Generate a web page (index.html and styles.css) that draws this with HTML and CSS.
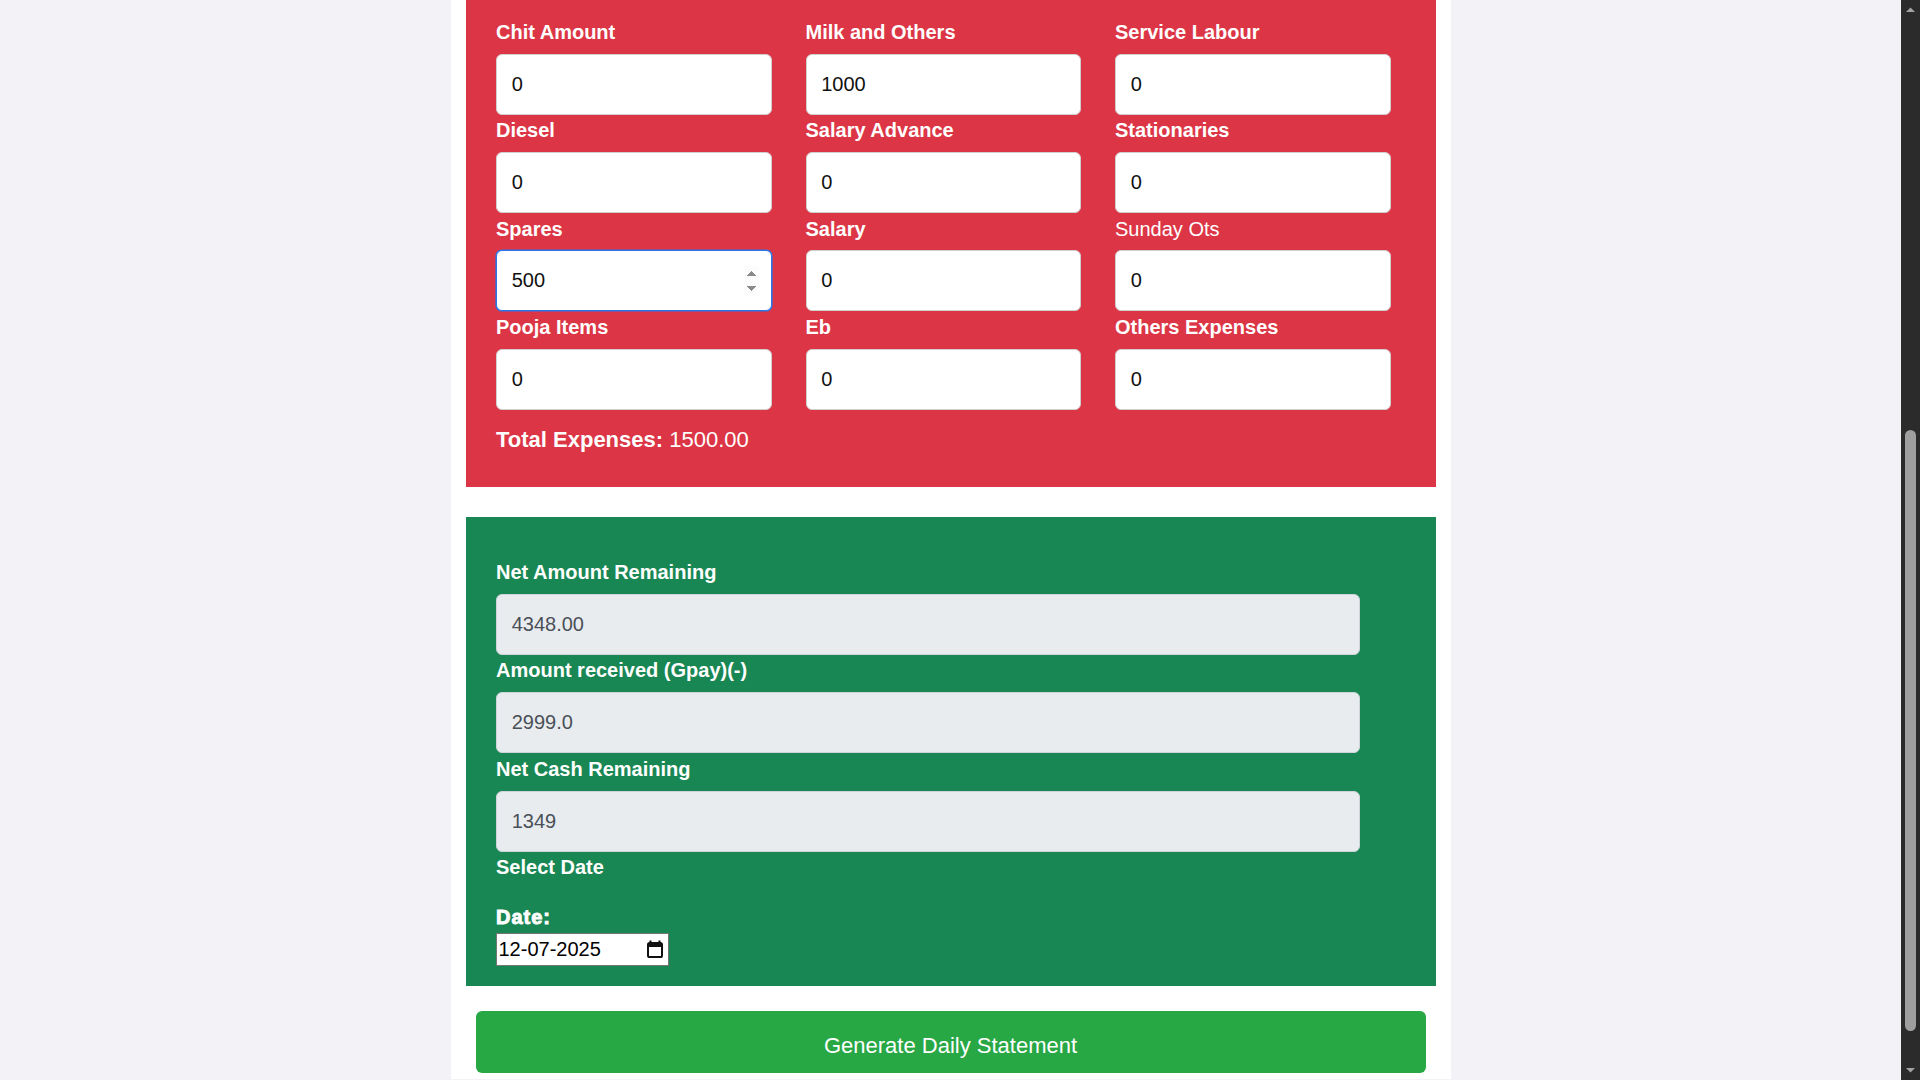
FILE: index.html
```html
<!DOCTYPE html>
<html lang="en">
<head>
<meta charset="utf-8">
<title>Daily Statement</title>
<link rel="stylesheet" href="styles.css">
</head>
<body>
<div class="viewport">
  <div class="container">
    <section class="card card-expense">
      <div class="field-grid">
        <div class="field"><label class="field-label">Chit Amount</label><input class="field-input" type="number" value="0"></div>
        <div class="field"><label class="field-label">Milk and Others</label><input class="field-input" type="number" value="1000"></div>
        <div class="field"><label class="field-label">Service Labour</label><input class="field-input" type="number" value="0"></div>

        <div class="field"><label class="field-label">Diesel</label><input class="field-input" type="number" value="0"></div>
        <div class="field"><label class="field-label">Salary Advance</label><input class="field-input" type="number" value="0"></div>
        <div class="field"><label class="field-label">Stationaries</label><input class="field-input" type="number" value="0"></div>

        <div class="field"><label class="field-label">Spares</label><input class="field-input field-input-active" type="number" value="500"></div>
        <div class="field"><label class="field-label">Salary</label><input class="field-input" type="number" value="0"></div>
        <div class="field"><label class="field-label field-label-plain">Sunday Ots</label><input class="field-input" type="number" value="0"></div>

        <div class="field"><label class="field-label">Pooja Items</label><input class="field-input" type="number" value="0"></div>
        <div class="field"><label class="field-label">Eb</label><input class="field-input" type="number" value="0"></div>
        <div class="field"><label class="field-label">Others Expenses</label><input class="field-input" type="number" value="0"></div>
      </div>
      <p class="total"><strong>Total Expenses:</strong> 1500.00</p>
    </section>

    <section class="card card-summary">
      <label class="field-label">Net Amount Remaining</label>
      <input class="field-input field-input-readonly" type="text" value="4348.00" readonly>
      <label class="field-label">Amount received (Gpay)(-)</label>
      <input class="field-input field-input-readonly" type="text" value="2999.0" readonly>
      <label class="field-label">Net Cash Remaining</label>
      <input class="field-input field-input-readonly" type="text" value="1349" readonly>
      <div class="date-heading">Select Date</div>
      <label class="date-label">Date:</label>
      <div class="date-box">
        <input class="date-input" type="text" value="12-07-2025">
        <svg class="date-icon" width="16" height="18" viewBox="0 0 16 18" aria-hidden="true">
          <path d="M3.5 0.5v3.5M12.5 0.5v3.5" stroke="#111" stroke-width="2"/>
          <rect x="1" y="3" width="14" height="14" rx="1.6" fill="none" stroke="#111" stroke-width="2"/>
          <rect x="1" y="3" width="14" height="4" fill="#111"/>
        </svg>
      </div>
    </section>

    <button class="generate-btn" type="button">Generate Daily Statement</button>
  </div>
</div>

<div class="scrollbar" aria-hidden="true">
  <div class="scrollbar-button">
    <svg width="19" height="19" viewBox="0 0 19 19"><path d="M5 12 L9.5 7.5 L14 12 Z" fill="#a3a3a3"/></svg>
  </div>
  <div class="scrollbar-track">
    <div class="scrollbar-thumb"></div>
  </div>
  <div class="scrollbar-button">
    <svg width="19" height="19" viewBox="0 0 19 19"><path d="M5 7 L9.5 11.5 L14 7 Z" fill="#a3a3a3"/></svg>
  </div>
</div>
</body>
</html>
```

FILE: styles.css
```css
* {
  box-sizing: border-box;
}

html {
  background: #f2f2f7;
}

body {
  display: flex;
  height: 100vh;
  margin: 0;
  overflow: hidden;
  font-family: "Liberation Sans", Arial, sans-serif;
  color: #212529;
  background: #f2f2f7;
}

.viewport {
  flex: 1;
  min-width: 0;
  overflow: hidden;
}

.container {
  width: 1000px;
  margin: 0 auto;
  padding: 0 15px 6px;
  background: #ffffff;
}

.card {
  margin-bottom: 30px;
  padding: 21px 45px 35px 30.5px;
  color: #ffffff;
}

.card-expense {
  background: #dc3545;
}

.card-summary {
  margin-bottom: 25px;
  padding: 44px 45px 20px 30.5px;
  background: #198754;
}

.field-grid {
  display: grid;
  grid-template-columns: repeat(3, 1fr);
  column-gap: 34px;
}

.field-label {
  display: block;
  margin-bottom: 9.8px;
  font-size: 20px;
  line-height: 23px;
  font-weight: 700;
  color: #ffffff;
}

.field-label-plain {
  font-weight: 400;
}

.field-input {
  display: block;
  width: 100%;
  height: 61px;
  margin: 0 0 4.5px;
  padding: 0 12px 0 14.7px;
  font-family: "Liberation Sans", Arial, sans-serif;
  font-size: 20px;
  color: #111111;
  background: #ffffff;
  border: 1px solid #cfcfcf;
  border-radius: 6px;
  outline: none;
}

.field-input-active {
  border-color: #2b74e6;
  box-shadow: 0 0 0 0.6px #2b74e6;
}

.field-input-active::-webkit-inner-spin-button {
  opacity: 1;
  height: 30px;
}

.field-input-readonly {
  width: 864px;
  color: #495057;
  background: #e9ecef;
  border-color: #ced4da;
}

.total {
  margin: 13px 0 0;
  font-size: 22px;
  line-height: 25px;
}

.date-heading {
  font-size: 20px;
  line-height: 23px;
  font-weight: 700;
}

.date-label {
  display: block;
  margin: 27px 0 3.8px;
  font-size: 20px;
  line-height: 23px;
  font-weight: 700;
  letter-spacing: 1px;
  -webkit-text-stroke: 0.9px #ffffff;
}

.date-box {
  display: flex;
  align-items: center;
  width: 173px;
  height: 33px;
  background: #ffffff;
  border: 1.5px solid #767676;
}

.date-input {
  flex: 1;
  min-width: 0;
  width: 0;
  height: 100%;
  padding: 0 0 0 1.5px;
  font-family: "Liberation Sans", Arial, sans-serif;
  font-size: 20px;
  color: #000000;
  background: transparent;
  border: 0;
  outline: none;
}

.date-icon {
  flex: none;
  margin-right: 5px;
}

.generate-btn {
  display: block;
  width: 950px;
  height: 62px;
  margin: 0 0 0 10px;
  padding: 9px 0 0;
  font-family: "Liberation Sans", Arial, sans-serif;
  font-size: 22px;
  color: #ffffff;
  background: #28a745;
  border: 0;
  border-radius: 6px;
}

.scrollbar {
  display: flex;
  flex-direction: column;
  flex: none;
  width: 19px;
  height: 100%;
  background: #2b2b2b;
}

.scrollbar-button {
  flex: none;
  height: 19px;
}

.scrollbar-button svg {
  display: block;
}

.scrollbar-track {
  flex: 1;
  padding: 411px 4px 0;
}

.scrollbar-thumb {
  height: 601px;
  background: #9f9f9f;
  border-radius: 6px;
}
```
